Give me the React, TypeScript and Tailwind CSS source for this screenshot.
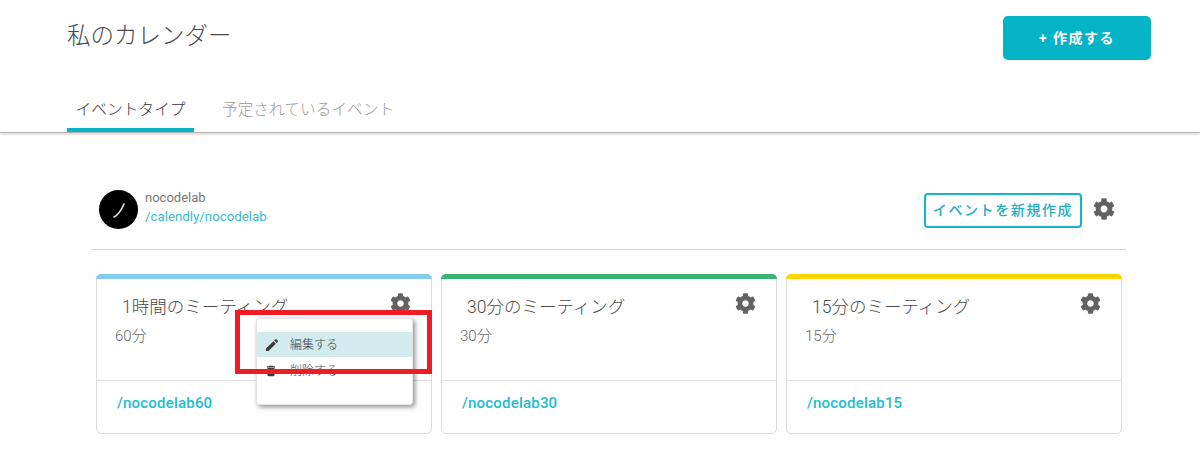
import { FaCog } from "react-icons/fa";
import { MdEdit, MdDelete } from "react-icons/md";

const font = { fontFamily: '"Roboto", "Noto Sans CJK JP", sans-serif' };

function Card({ title, dur, link, bar, menu }: { title: string; dur: string; link: string; bar: string; menu?: boolean }) {
  return (
    <div className="relative w-[336px] h-[160px] flex flex-col rounded-[5px] border border-[#dcdcdc] bg-white">
      <div className={`h-[5px] -mx-px -mt-px rounded-t-[5px] ${bar}`} />
      <div className="h-[102px] relative border-b border-[#e0e0e0] -mr-px">
        <div className="absolute left-[25px] top-[16px] text-[17.5px] leading-[24px] font-light text-[#4a4a4a]">{title}</div>
        <div className="absolute left-[18px] top-[47px] text-[15px] leading-[20px] font-light text-[#666]">{dur}</div>
        <FaCog className="absolute right-[21px] top-[14px] text-[#626262]" size={21} />
      </div>
      <div className="pl-[20px] pt-[12px] text-[15px] leading-[20px] font-medium tracking-[0.2px] text-[#20bdd1]">{link}</div>
      {menu && (
        <div className="absolute left-[159px] top-[43px] w-[157px] h-[87px] pt-[13px] rounded-[3px] bg-white border border-[#e4e4e4] shadow-[2px_2px_5px_rgba(0,0,0,0.45)] z-10">
          <div className="h-[25px] bg-[#d1ebef] flex items-center pl-[7px] text-[#3a3a3a]">
            <MdEdit size={16} />
            <span className="ml-[10px] text-[12px] font-light text-[#444]">編集する</span>
          </div>
          <div className="h-[25px] mt-[1px] flex items-center pl-[7px] text-[#3a3a3a]">
            <MdDelete size={14} />
            <span className="ml-[12px] text-[12px] font-light text-[#444]">削除する</span>
          </div>
        </div>
      )}
    </div>
  );
}

export default function App() {
  return (
    <div className="relative w-[1200px] h-[473px] overflow-hidden bg-[#fefefe]" style={font}>
      <header className="h-[133px] bg-white border-b border-[#b5b5b5] shadow-[0_1px_3px_rgba(0,0,0,0.2)] flex flex-col pl-[67px] pr-[49px]">
        <div className="h-[97px] flex items-start justify-between">
          <h1 className="mt-[20px] text-[23.5px] leading-[32px] font-light text-[#4a4a4a]">私のカレンダー</h1>
          <button className="mt-[16px] w-[148px] h-[44px] rounded-[5px] bg-[#05b3c6] text-white text-[14px] font-bold tracking-[1.5px]">+ 作成する</button>
        </div>
        <nav className="flex items-start">
          <div className="w-[127px] h-[35px] border-b-[4px] border-[#05b3c6] pt-[1px] text-center text-[15.7px] leading-[24px] font-light text-[#333]">イベントタイプ</div>
          <div className="ml-[28px] pt-[1px] text-[15.7px] leading-[24px] font-light text-[#999]">予定されているイベント</div>
        </nav>
      </header>

      <main className="pl-[91px] w-[1126px]">
        <div className="h-[117px] pt-[56px] border-b border-[#d6d6d6] flex items-start pl-[8px]">
          <div className="w-[39px] h-[39px] mt-[1px] rounded-full bg-black flex items-center justify-center shrink-0">
            <svg width="39" height="39" viewBox="0 0 39 39"><path d="M15 27 C19 25 22 21 25 14" stroke="#e8e8e8" strokeWidth="1.6" fill="none" strokeLinecap="round" /></svg>
          </div>
          <div className="ml-[7px]">
            <div className="text-[13px] leading-[18px] text-[#777]">nocodelab</div>
            <div className="text-[13.3px] leading-[20px] text-[#35bcd0]">/calendly/nocodelab</div>
          </div>
          <div className="ml-auto flex items-start mr-[11px]">
            <button className="w-[158px] h-[35px] mt-[4px] rounded-[4px] border-2 border-[#12b5c9] bg-white text-[14px] font-medium tracking-[1.6px] text-[#22aec2]">イベントを新規作成</button>
            <FaCog className="ml-[11px] mt-[9px] text-[#626262]" size={22} />
          </div>
        </div>
        <div className="mt-[24px] ml-[5px] flex gap-[9px]">
          <Card title="1時間のミーティング" dur="60分" link="/nocodelab60" bar="bg-[#84cdea]" menu />
          <Card title="30分のミーティング" dur="30分" link="/nocodelab30" bar="bg-[#3cb371]" />
          <Card title="15分のミーティング" dur="15分" link="/nocodelab15" bar="bg-[#ffd500]" />
        </div>
      </main>

      <div className="absolute left-[235px] top-[310px] w-[197px] h-[64px] border-[5px] border-[#ee1c25] z-20" />
    </div>
  );
}
